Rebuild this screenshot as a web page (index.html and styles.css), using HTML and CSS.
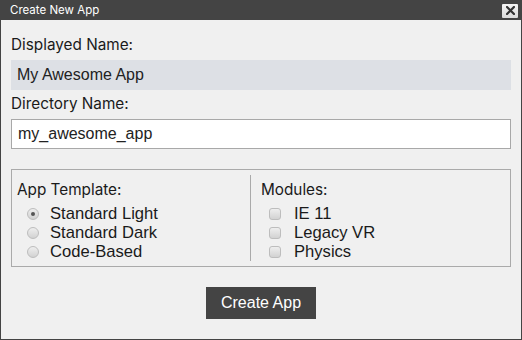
FILE: index.html
```html
<!DOCTYPE html>
<html lang="en">
<head>
    <meta charset="UTF-8">
    <meta name="viewport" content="width=device-width, initial-scale=1.0">
    <title>Create New App</title>
    <link rel="stylesheet" href="styles.css">
</head>
<body>
    <div class="window">
        <div class="titlebar">
            <span class="title">Create New App</span>
            <button class="close" title="Close">
                <svg width="9" height="9" viewBox="0 0 9 9"><path d="M1 1L8 8M8 1L1 8" stroke="#333" stroke-width="2.2" stroke-linecap="square"/></svg>
            </button>
        </div>
        <div class="content">
            <label class="field-label">Displayed Name:</label>
            <div class="display-field">My Awesome App</div>
            <label class="field-label" for="dir_name">Directory Name:</label>
            <input type="text" id="dir_name" class="text-input" value="my_awesome_app">

            <div class="options">
                <div class="column">
                    <div class="group-title">App Template:</div>
                    <label class="option"><input type="radio" name="template" checked> Standard Light</label>
                    <label class="option"><input type="radio" name="template"> Standard Dark</label>
                    <label class="option"><input type="radio" name="template"> Code-Based</label>
                </div>
                <div class="column modules">
                    <div class="group-title">Modules:</div>
                    <label class="option"><input type="checkbox"> IE 11</label>
                    <label class="option"><input type="checkbox"> Legacy VR</label>
                    <label class="option"><input type="checkbox"> Physics</label>
                </div>
            </div>

            <div class="actions">
                <button class="create">Create App</button>
            </div>
        </div>
    </div>
</body>
</html>
```

FILE: styles.css
```css
body {
    margin: 0;
    padding: 0;
    background: #f0f0f0;
    font-family: Inter, 'Noto Sans', sans-serif;
    color: #222;
}

.window {
    width: 522px;
    height: 340px;
    box-sizing: border-box;
    border: 1px solid #444;
    border-top: none;
    background: #f0f0f0;
}

.titlebar {
    height: 20px;
    background: #444;
    color: #fff;
    display: flex;
    align-items: center;
    justify-content: space-between;
    padding: 0 3px 0 9px;
}

.title {
    font-size: 11.5px;
}

.close {
    width: 16px;
    height: 14px;
    padding: 0;
    border: none;
    border-radius: 1px;
    background: linear-gradient(#f4f4f4, #dcdcdc);
    display: flex;
    align-items: center;
    justify-content: center;
    margin-top: 1px;
}

.content {
    padding: 15px 10px 0 10px;
}

.field-label {
    display: block;
    font-size: 15.3px;
    line-height: 20px;
    color: #1a1a1a;
}

.display-field {
    margin-top: 5px;
    margin-bottom: 4px;
    height: 30px;
    line-height: 30px;
    padding: 0 6px;
    background: #dde0e5;
    font-family: 'Liberation Sans', Arial, sans-serif;
    font-size: 16px;
    color: #222;
}

.text-input {
    display: block;
    margin-top: 5px;
    width: 100%;
    height: 30px;
    box-sizing: border-box;
    border: 1px solid #a8a8a8;
    background: #fff;
    padding: 0 6px;
    font-family: 'Liberation Sans', Arial, sans-serif;
    font-size: 16px;
    color: #222;
    outline: none;
}

.options {
    margin-top: 20px;
    border: 1px solid #aaa;
    display: flex;
    padding: 5px 0;
}

.column {
    flex: 0 0 238px;
    padding: 5px 0 0 5px;
    box-sizing: border-box;
}

.column.modules {
    flex: 1;
    border-left: 1px solid #aaa;
    padding-left: 10px;
}

.group-title {
    font-size: 15.3px;
    line-height: 20px;
    margin-bottom: 4px;
    color: #1a1a1a;
}

.option {
    display: flex;
    align-items: center;
    height: 19px;
    font-family: 'Liberation Sans', Arial, sans-serif;
    font-size: 16.6px;
    color: #1a1a1a;
    padding-left: 10px;
}

.modules .option {
    padding-left: 8px;
}

.option input {
    appearance: none;
    -webkit-appearance: none;
    width: 12px;
    height: 12px;
    margin: 0 11px 0 0;
    border: 1px solid #bdbdbd;
    background: linear-gradient(#eeeeee, #d2d2d2);
    box-sizing: border-box;
}

.option input[type="radio"] {
    border-radius: 50%;
    position: relative;
}

.option input[type="radio"]:checked::after {
    content: "";
    position: absolute;
    left: 3px;
    top: 3px;
    width: 4px;
    height: 4px;
    border-radius: 50%;
    background: #555;
}

.option input[type="checkbox"] {
    border-radius: 3px;
    margin-right: 13px;
}

.actions {
    display: flex;
    justify-content: center;
    margin-top: 20px;
}

.create {
    width: 110px;
    height: 32px;
    background: #444;
    color: #fff;
    border: none;
    font-family: 'Liberation Sans', Arial, sans-serif;
    font-size: 16px;
    cursor: pointer;
}
```
